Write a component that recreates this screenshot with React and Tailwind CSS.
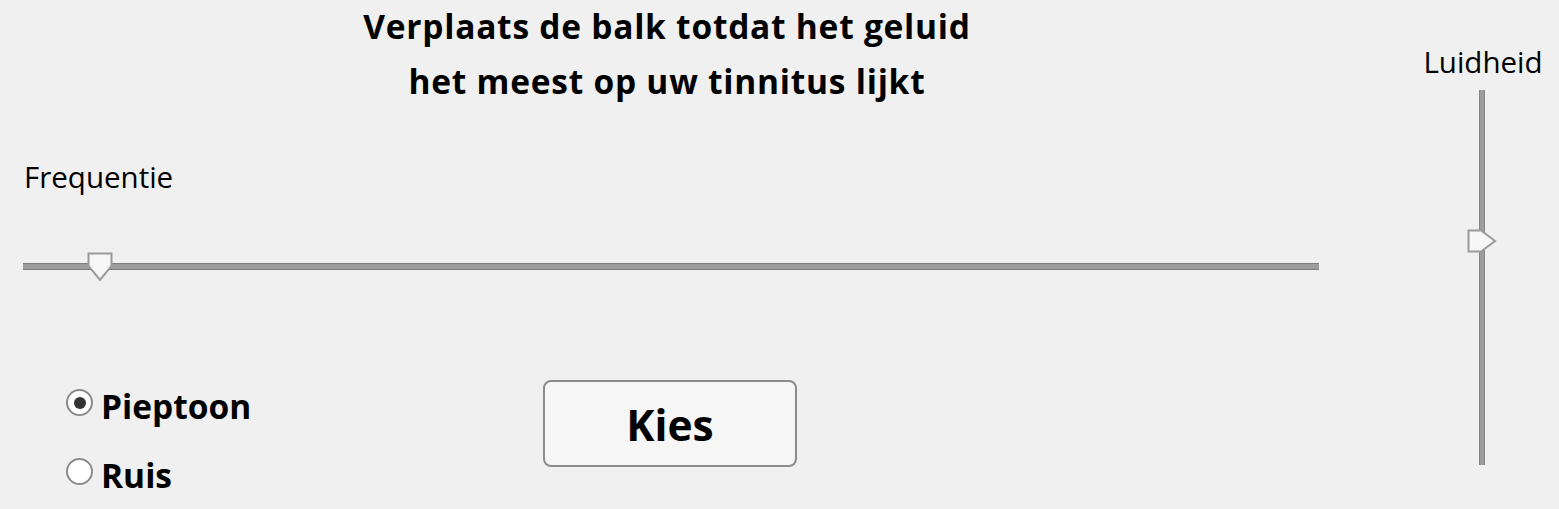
import React from "react";

function HThumb() {
  return (
    <svg width="26" height="30" viewBox="0 0 26 30" className="absolute left-[64px] top-0">
      <polygon points="1.5,1.5 24.5,1.5 24.5,14 13,28 1.5,14" fill="#f7f7f7" stroke="#9a9a9a" strokeWidth="2" />
    </svg>
  );
}

function VThumb() {
  return (
    <svg width="30" height="24" viewBox="0 0 30 24" className="absolute left-0 top-[139px]">
      <polygon points="1.5,1.5 14,1.5 28,12 14,22.5 1.5,22.5" fill="#f7f7f7" stroke="#9a9a9a" strokeWidth="2" />
    </svg>
  );
}

function Radio({ checked, label }) {
  return (
    <div className="flex items-start">
      <div className="w-[27px] h-[27px] rounded-full bg-white border-2 border-[#8a8a8a] flex items-center justify-center shrink-0">
        {checked && <div className="w-[12px] h-[12px] rounded-full bg-[#333]" />}
      </div>
      <span className="ml-[8px] text-[33.5px] leading-[34px] font-bold text-black">{label}</span>
    </div>
  );
}

export default function App() {
  return (
    <div className="w-[1559px] h-[509px] bg-[#f0f0f0] flex overflow-hidden font-['Open_Sans',sans-serif] text-black">
      <div className="w-[1334px] flex flex-col">
        <div className="-mt-[1px] text-center text-[33.5px] tracking-[0.75px] leading-[55px] font-bold">
          <div>Verplaats de balk totdat het geluid</div>
          <div>het meest op uw tinnitus lijkt</div>
        </div>
        <div className="mt-[51px] pl-[24px] text-[29.5px] leading-[34px]">Frequentie</div>
        <div className="mt-[58px] ml-[23px] w-[1296px] h-[30px] relative">
          <div className="mt-[11px] h-[7px] bg-[#9d9d9d] border-y border-[#7e7e7e]" />
          <HThumb />
        </div>
        <div className="mt-[98px] flex">
          <div className="w-[543px] pl-[66px] pt-[9px] flex flex-col gap-[35px]">
            <Radio checked label="Pieptoon" />
            <Radio label="Ruis" />
          </div>
          <button className="w-[254px] h-[87px] pt-[4px] rounded-[8px] border-2 border-[#8c8c8c] bg-[#f6f6f6] flex items-center justify-center text-[42.5px] font-bold leading-none">
            Kies
          </button>
        </div>
      </div>
      <div className="ml-[89px] w-[120px] flex flex-col items-center pt-[45px]">
        <div className="text-[29.5px] leading-[34px] whitespace-nowrap">Luidheid</div>
        <div className="-ml-[2px] mt-[11px] w-[30px] h-[375px] relative flex justify-center">
          <div className="w-[6px] h-full bg-[#9d9d9d] border-x border-[#858585]" />
          <VThumb />
        </div>
      </div>
    </div>
  );
}
